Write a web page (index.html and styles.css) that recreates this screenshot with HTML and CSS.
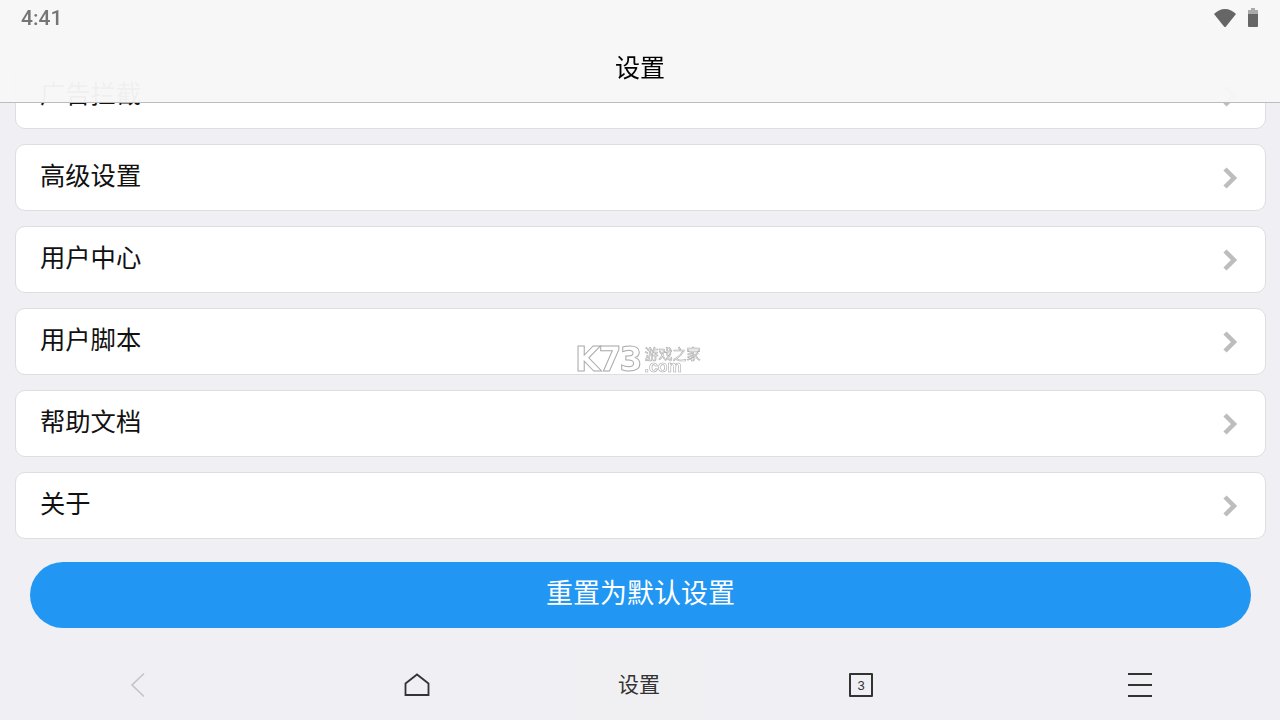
FILE: index.html
```html
<!DOCTYPE html>
<html lang="zh-CN">
<head>
    <meta charset="UTF-8">
    <meta name="viewport" content="width=device-width, initial-scale=1.0">
    <title>设置</title>
    <link rel="stylesheet" href="styles.css">
</head>
<body>

    <!-- Barra superior translúcida -->
    <header class="top-bar">
        <div class="status-bar">
            <span class="time">4:41</span>
            <span class="status-icons">
                <svg class="wifi" width="24" height="20" viewBox="0 0 24 20"><path d="M1 6C4 3 7.800 1 12 1s8 2 11 5L13 18.500a1.300 1.300 0 0 1-2 0z" fill="#666"/></svg>
                <svg class="battery" width="12" height="21" viewBox="0 0 12 21"><path d="M4 1h4v2h3v4H1V3h3z" fill="#aaa"/><path d="M1 7h10v12a1 1 0 0 1-1 1H2a1 1 0 0 1-1-1z" fill="#666"/></svg>
            </span>
        </div>
        <h1 class="title">设置</h1>
    </header>

    <main class="settings">
        <a class="row">广告拦截<svg class="arrow" width="16" height="24" viewBox="0 0 16 24"><path d="M3 3l9 9-9 9" fill="none" stroke="#bdbdbd" stroke-width="4.500"/></svg></a>
        <a class="row">高级设置<svg class="arrow" width="16" height="24" viewBox="0 0 16 24"><path d="M3 3l9 9-9 9" fill="none" stroke="#bdbdbd" stroke-width="4.500"/></svg></a>
        <a class="row">用户中心<svg class="arrow" width="16" height="24" viewBox="0 0 16 24"><path d="M3 3l9 9-9 9" fill="none" stroke="#bdbdbd" stroke-width="4.500"/></svg></a>
        <a class="row">用户脚本<svg class="arrow" width="16" height="24" viewBox="0 0 16 24"><path d="M3 3l9 9-9 9" fill="none" stroke="#bdbdbd" stroke-width="4.500"/></svg></a>
        <a class="row">帮助文档<svg class="arrow" width="16" height="24" viewBox="0 0 16 24"><path d="M3 3l9 9-9 9" fill="none" stroke="#bdbdbd" stroke-width="4.500"/></svg></a>
        <a class="row">关于<svg class="arrow" width="16" height="24" viewBox="0 0 16 24"><path d="M3 3l9 9-9 9" fill="none" stroke="#bdbdbd" stroke-width="4.500"/></svg></a>
        <button class="reset-btn">重置为默认设置</button>
    </main>

    <!-- Marca de agua -->
    <div class="watermark">
        <span class="wm-logo">K73</span>
        <span class="wm-side">
            <span class="wm-cn">游戏之家</span>
            <span class="wm-com">.com</span>
        </span>
    </div>

    <nav class="bottom-nav">
        <span class="nav-item">
            <svg width="18" height="26" viewBox="0 0 18 26"><path d="M14 1.500L2 13l12 11.500" fill="none" stroke="#c4c4c8" stroke-width="1.600"/></svg>
        </span>
        <span class="nav-item">
            <svg width="26" height="24" viewBox="0 0 26 24"><path d="M1.500 10.500L13 1.500l11.500 9v11.500h-23z" fill="none" stroke="#333" stroke-width="1.800"/></svg>
        </span>
        <span class="nav-item nav-title">设置</span>
        <span class="nav-item"><span class="tabs-count">3</span></span>
        <span class="nav-item">
            <span class="menu-icon"><i></i><i></i><i></i></span>
        </span>
    </nav>

</body>
</html>
```

FILE: styles.css
```css
body {
    font-family: "Noto Sans CJK SC", sans-serif;
    background-color: #efeff4;
    margin: 0;
    padding: 0;
    width: 1280px;
    height: 720px;
    overflow: hidden;
    display: flex;
    flex-direction: column;
}

/* Barra superior */
.top-bar {
    position: fixed;
    left: 0;
    top: 0;
    width: 100%;
    height: 103px;
    z-index: 2;
    box-sizing: border-box;
    background-color: rgba(247, 247, 247, 0.97);
    border-bottom: 1px solid #bcbcbc;
}

.status-bar {
    display: flex;
    justify-content: space-between;
    align-items: center;
    height: 36px;
    padding: 0 21px;
}

.time {
    font-family: "Roboto", sans-serif;
    font-size: 21px;
    font-weight: 500;
    color: #757575;
}

.status-icons {
    display: flex;
    align-items: center;
    gap: 10px;
    margin-top: -1px;
}

.title {
    margin: 0;
    padding-top: 12px;
    font-size: 25px;
    font-weight: 400;
    line-height: 36px;
    text-align: center;
    color: #000;
}

/* Lista de ajustes */
.settings {
    flex: 1;
    display: flex;
    flex-direction: column;
    padding: 62px 14px 0 15px;
    gap: 15px;
}

.row {
    display: flex;
    justify-content: space-between;
    align-items: center;
    height: 67px;
    box-sizing: border-box;
    padding: 0 27px 7px 24px;
    background-color: #ffffff;
    border: 1px solid #dedee0;
    border-radius: 10px;
    font-size: 25.300px;
    color: #111;
}

.arrow {
    margin-top: 8px;
}

.reset-btn {
    display: block;
    height: 66px;
    margin: 8px 15px 0;
    padding: 0 0 7px;
    border: none;
    border-radius: 33px;
    background-color: #2196f3;
    color: white;
    font-family: inherit;
    font-size: 27px;
}

/* Marca de agua */
.watermark {
    position: fixed;
    left: 575px;
    top: 344px;
    z-index: 1;
    display: flex;
    align-items: center;
    gap: 4px;
    color: #fff;
}

.wm-logo {
    font-family: "DejaVu Sans", sans-serif;
    font-size: 33px;
    font-weight: 700;
    line-height: 32px;
    letter-spacing: -2px;
    color: #fff;
    -webkit-text-stroke: 1px #aaa;
}

.wm-side {
    display: flex;
    flex-direction: column;
    align-items: flex-start;
    line-height: 14px;
}

.wm-cn {
    font-size: 14px;
    color: #fff;
    -webkit-text-stroke: 0.6px #aaa;
}

.wm-com {
    font-family: "Liberation Sans", sans-serif;
    font-size: 16px;
    font-weight: 700;
    color: #fff;
    -webkit-text-stroke: 0.6px #aaa;
}

/* Navegación inferior */
.bottom-nav {
    display: grid;
    grid-template-columns: 277px 280px 164px 280px 277px;
    height: 70px;
    margin-bottom: 0;
}

.nav-item {
    display: flex;
    justify-content: center;
    align-items: center;
}

.nav-title {
    margin: 0 17px;
    padding-bottom: 4px;
    font-size: 21px;
    color: #333;
    background-color: #f0f0f2;
}

.tabs-count {
    display: flex;
    justify-content: center;
    align-items: center;
    box-sizing: border-box;
    width: 24px;
    height: 24px;
    border: 2px solid #333;
    border-radius: 1px;
    font-family: "Liberation Sans", sans-serif;
    font-size: 13px;
    color: #333;
}

.menu-icon {
    display: flex;
    flex-direction: column;
    gap: 9px;
    width: 24px;
}

.menu-icon i {
    display: block;
    height: 2px;
    background-color: #333;
}
```
